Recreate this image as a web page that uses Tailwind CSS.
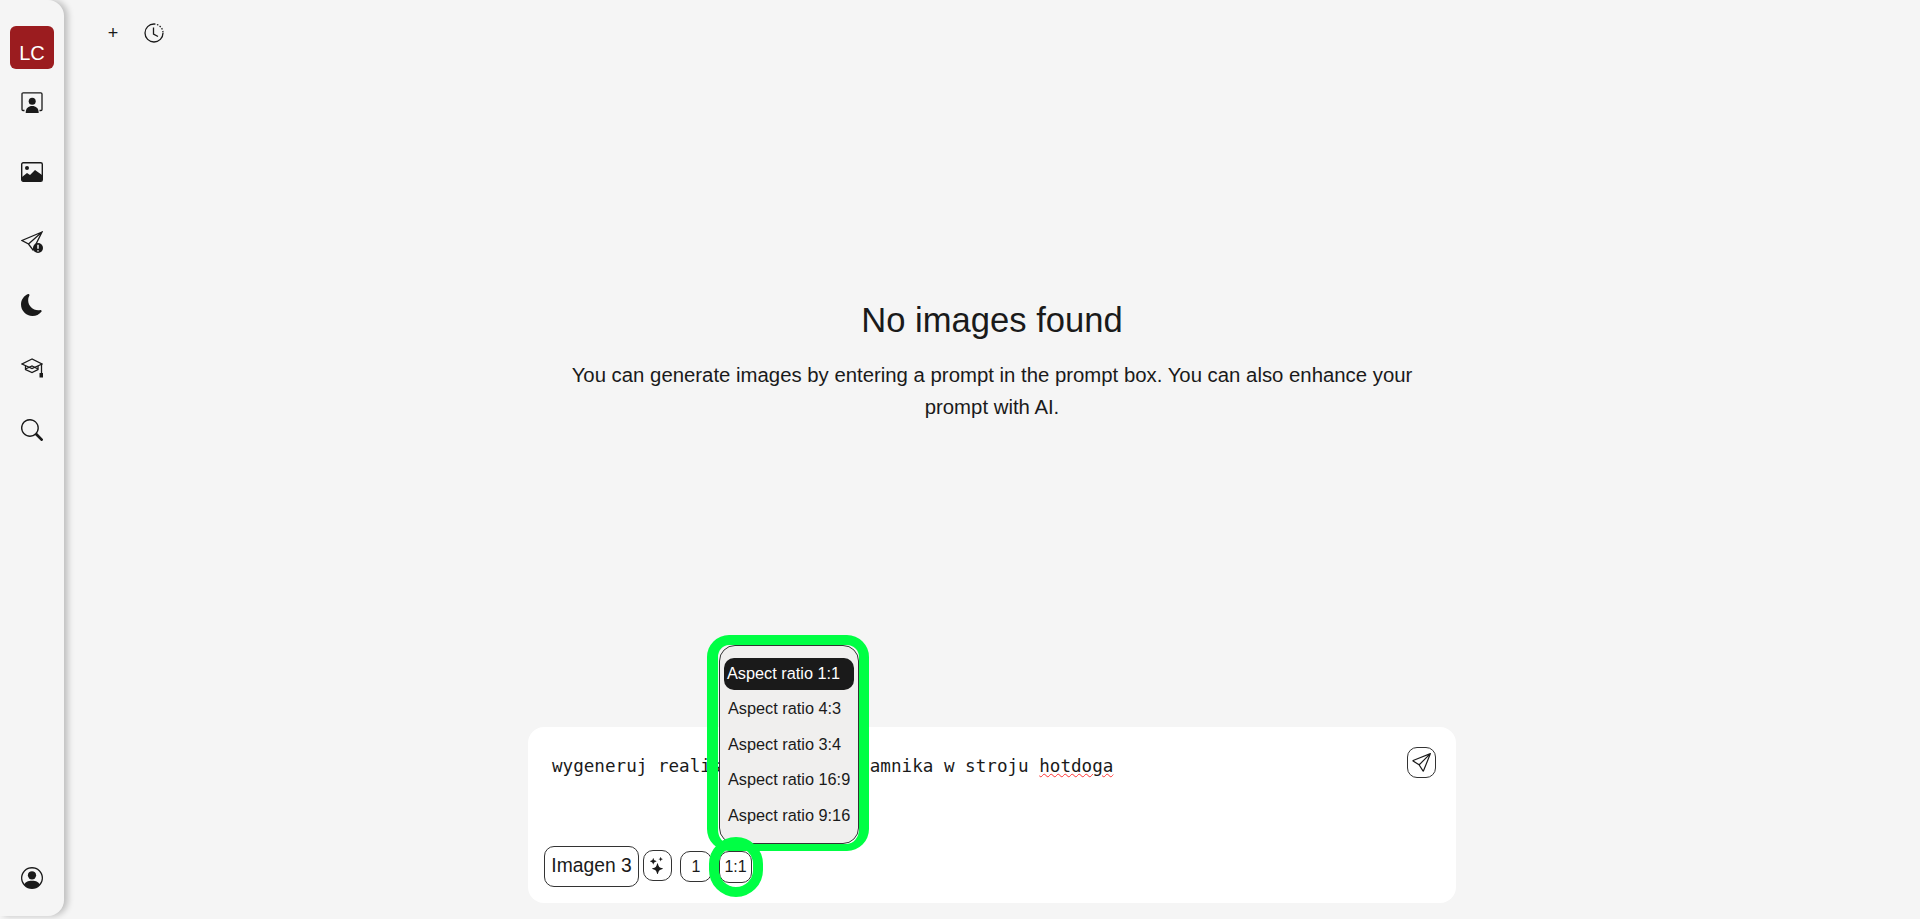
<!DOCTYPE html>
<html lang="en">
<head>
    <meta charset="UTF-8">
    <meta name="viewport" content="width=device-width, initial-scale=1.0">
    <title>Images</title>
    <script src="https://cdn.jsdelivr.net/npm/@tailwindcss/browser@4"></script>
</head>
<body class="flex h-screen overflow-hidden bg-[#f5f5f5] text-[#1a1a1a] font-['Liberation_Sans',Arial,sans-serif]">
    <!-- sidebar -->
    <aside class="relative flex flex-col items-center w-[64px] h-[916px] shrink-0 rounded-r-2xl bg-[#f5f5f5] shadow-[4px_0_6px_rgba(0,0,0,0.22)] pt-[26px]">
        <div class="flex items-end justify-center w-[44px] h-[43px] pb-[2px] rounded-md bg-[#9b1c1f] text-white text-[20px] leading-[28px]">LC</div>
        <button class="mt-[23px] w-[22px] h-[21px]">
            <svg viewBox="0 0 22 21" class="w-full h-full" fill="#1a1a1a"><path d="M3.5 18.5 H2 Q1 18.5 1 17.5 V2 Q1 0.8 2.2 0.8 H19.8 Q21 0.8 21 2 V17.5 Q21 18.5 20 18.5 H18.5" fill="none" stroke="#1a1a1a" stroke-width="1.3"/><circle cx="11.2" cy="9.3" r="3.5"/><path d="M4.7 21 C4.7 16 7.5 14 11.2 14 C14.9 14 17.7 16 17.7 21 Z"/></svg>
        </button>
        <button class="mt-[49px] w-[22px] h-[20px]">
            <svg viewBox="0 0 22 20" class="w-full h-full" fill="#1a1a1a"><rect x="0.7" y="0.7" width="20.6" height="18.6" rx="1.5" fill="none" stroke="#1a1a1a" stroke-width="1.4"/><circle cx="6" cy="6" r="2"/><path d="M1 18 V15 L6 11 L9 13 L14 8 L21 13 V18 Q21 19 20 19 H2 Q1 19 1 18 Z"/></svg>
        </button>
        <button class="mt-[49px] w-[22px] h-[22px]">
            <svg viewBox="0 0 22 22" class="w-full h-full" fill="none" stroke="#1a1a1a" stroke-width="1.3"><path d="M21 1 L1 9.5 L7.5 13 L12 19 Z M21 1 L7.5 13"/><circle cx="17" cy="17" r="5" fill="#1a1a1a" stroke="none"/><path d="M17 13.8 V17.8 M17 19.2 V20.4" stroke="#f5f5f5" stroke-width="1.5"/></svg>
        </button>
        <button class="mt-[41px] w-[22px] h-[22px]">
            <svg viewBox="0 0 16 16" class="w-full h-full" fill="#1a1a1a"><path d="M6 .278a.768.768 0 0 1 .08.858 7.208 7.208 0 0 0-.878 3.46c0 4.021 3.278 7.277 7.318 7.277.527 0 1.04-.055 1.533-.16a.787.787 0 0 1 .81.316.733.733 0 0 1-.031.893A8.349 8.349 0 0 1 8.344 16C3.734 16 0 12.286 0 7.71 0 4.266 2.114 1.312 5.124.06A.752.752 0 0 1 6 .278z"/></svg>
        </button>
        <button class="mt-[42px] w-[22px] h-[20px]">
            <svg viewBox="0 0 22 20" class="w-full h-full" fill="none" stroke="#1a1a1a" stroke-width="1.3"><path d="M11 1 L1 6 L11 10.5 L21 6 Z"/><path d="M4.5 8 V11.5 L11 14.5 L17 11.5 V8"/><path d="M4.5 11 L11 8 L17 11"/><path d="M20.5 6 V15"/><rect x="18.5" y="15" width="4" height="4.5" fill="#1a1a1a" stroke="none"/></svg>
        </button>
        <button class="mt-[41px] w-[22px] h-[22px]">
            <svg viewBox="0 0 16 16" class="w-full h-full" fill="#1a1a1a"><path d="M11.742 10.344a6.5 6.5 0 1 0-1.397 1.398h-.001c.03.04.062.078.098.115l3.85 3.85a1 1 0 0 0 1.415-1.414l-3.85-3.85a1.007 1.007 0 0 0-.115-.1zM12 6.5a5.5 5.5 0 1 1-11 0 5.5 5.5 0 0 1 11 0z"/></svg>
        </button>
        <button class="absolute top-[867px] left-[21px] w-[22px] h-[22px]">
            <svg viewBox="0 0 16 16" class="w-full h-full" fill="#1a1a1a"><path d="M11 6a3 3 0 1 1-6 0 3 3 0 0 1 6 0z"/><path d="M0 8a8 8 0 1 1 16 0A8 8 0 0 1 0 8zm8-7a7 7 0 0 0-5.468 11.37C3.242 11.226 4.805 10 8 10s4.757 1.225 5.468 2.37A7 7 0 0 0 8 1z"/></svg>
        </button>
    </aside>

    <!-- main -->
    <main class="flex flex-col items-center flex-1 h-full">
        <div class="flex items-center self-stretch h-[66px] pl-[39px] gap-[21px]">
            <button class="w-[20px] text-[18px] leading-none text-center">+</button>
            <button class="w-[20px] h-[20px]">
                <svg viewBox="0 0 20 20" class="w-full h-full" fill="none" stroke="#1a1a1a" stroke-width="1.3"><path d="M10 1 A9 9 0 1 0 19 10"/><path d="M10 1 A9 9 0 0 1 19 10" stroke-dasharray="1.5 1.5"/><path d="M9.5 4.5 V11 L14 13.5"/></svg>
            </button>
        </div>

        <h1 class="mt-[233px] text-[34.6px] leading-[42px] font-normal">No images found</h1>
        <p class="mt-[18px] w-[860px] text-center text-[20.35px] leading-[32px]">You can generate images by entering a prompt in the prompt box. You can also enhance your prompt with AI.</p>

        <!-- prompt box -->
        <div class="relative mt-auto mb-[16px] w-[928px] h-[176px] shrink-0 rounded-2xl bg-white">
            <div class="absolute left-[24px] top-[26px] whitespace-pre font-['DejaVu_Sans_Mono',monospace] text-[17.6px] leading-[26px]">wygeneruj realis              amnika w stroju <span class="underline decoration-wavy decoration-[#ff3333] decoration-1">hotdoga</span></div>
            <button class="absolute left-[879px] top-[20px] flex items-center justify-center w-[29px] h-[31px] rounded-[10px] border border-[#333]">
                <svg viewBox="0 0 16 16" class="w-[19px] h-[19px]" fill="#1a1a1a"><path d="M15.854.146a.5.5 0 0 1 .11.54l-5.819 14.547a.75.75 0 0 1-1.329.124l-3.178-4.995L.643 7.184a.75.75 0 0 1 .124-1.33L15.314.037a.5.5 0 0 1 .54.11ZM6.636 10.07l2.761 4.338L14.13 2.576 6.636 10.07Zm6.787-8.201L1.591 6.602l4.339 2.76 7.494-7.493Z"/></svg>
            </button>

            <div class="absolute left-[16px] top-[119px] flex items-start">
                <button class="w-[95px] h-[41px] rounded-[10px] border border-[#333] text-[19.3px]">Imagen 3</button>
                <button class="flex items-center justify-center ml-[4px] mt-[4px] w-[29px] h-[31px] rounded-[10px] border border-[#333]">
                    <svg viewBox="0 0 16 16" class="w-[17px] h-[17px]" fill="#1a1a1a"><path d="M7.657 6.247c.11-.33.576-.33.686 0l.645 1.937a2.89 2.89 0 0 0 1.829 1.828l1.936.645c.33.11.33.576 0 .686l-1.937.645a2.89 2.89 0 0 0-1.828 1.829l-.645 1.936a.361.361 0 0 1-.686 0l-.645-1.937a2.89 2.89 0 0 0-1.828-1.828l-1.937-.645a.361.361 0 0 1 0-.686l1.937-.645a2.89 2.89 0 0 0 1.828-1.828l.645-1.937zM3.794 1.148a.217.217 0 0 1 .412 0l.387 1.162c.173.518.579.924 1.097 1.097l1.162.387a.217.217 0 0 1 0 .412l-1.162.387A1.734 1.734 0 0 0 4.593 5.69l-.387 1.162a.217.217 0 0 1-.412 0L3.407 5.69A1.734 1.734 0 0 0 2.31 4.593l-1.162-.387a.217.217 0 0 1 0-.412l1.162-.387A1.734 1.734 0 0 0 3.407 2.31l.387-1.162zM10.863.099a.145.145 0 0 1 .274 0l.258.774c.115.346.386.617.732.732l.774.258a.145.145 0 0 1 0 .274l-.774.258a1.156 1.156 0 0 0-.732.732l-.258.774a.145.145 0 0 1-.274 0l-.258-.774a1.156 1.156 0 0 0-.732-.732L9.1 2.137a.145.145 0 0 1 0-.274l.774-.258c.346-.115.617-.386.732-.732L10.863.1z"/></svg>
                </button>
                <button class="ml-[8px] mt-[5px] w-[32px] h-[31px] rounded-[10px] border border-[#333] text-base">1</button>
                <button class="ml-[7px] mt-[5px] w-[33px] h-[32px] rounded-[10px] border border-[#333] text-base">1:1</button>
            </div>

            <!-- aspect ratio menu -->
            <div class="absolute left-[191px] top-[-82px] flex flex-col gap-[3.4px] w-[140px] h-[199px] pt-[12px] px-[4px] rounded-2xl border border-[#333] bg-[#f0efee] text-[16.3px] whitespace-nowrap">
                <div class="h-[32px] leading-[31px] px-[3px] rounded-[10px] bg-[#1a1a1a] text-white">Aspect ratio 1:1</div>
                <div class="h-[32px] leading-[31px] px-[4px]">Aspect ratio 4:3</div>
                <div class="h-[32px] leading-[31px] px-[4px]">Aspect ratio 3:4</div>
                <div class="h-[32px] leading-[31px] px-[4px]">Aspect ratio 16:9</div>
                <div class="h-[32px] leading-[31px] px-[4px]">Aspect ratio 9:16</div>
            </div>

            <!-- green annotation marks -->
            <div class="absolute left-[179px] top-[-92px] w-[162px] h-[216px] rounded-[22px] border-[10px] border-b-[7px] border-l-[11px] border-[#00ff44]"></div>
            <div class="absolute left-[181px] top-[110px] w-[54px] h-[60px] rounded-[27px] border-[10px] border-[#00ff44]"></div>
        </div>
    </main>
</body>
</html>
